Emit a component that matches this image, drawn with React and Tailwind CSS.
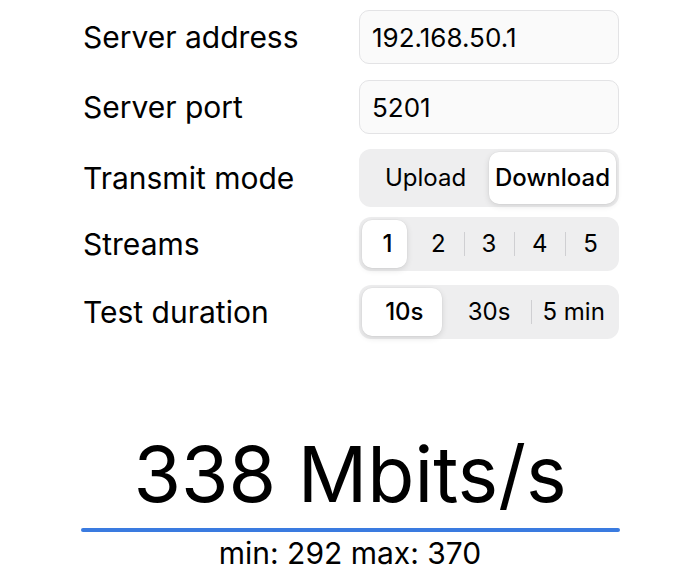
import React from "react";

function Segmented({ items, selected, thumbClass, h }) {
  return (
    <div className={"flex w-[260px] items-stretch rounded-[12px] bg-[#eeeeef] p-[3px] " + h}>
      {items.map((it, i) => {
        const isSel = i === selected;
        const showSep = i > 0 && i !== selected && i - 1 !== selected;
        return (
          <div key={it} className="relative flex flex-1 items-center justify-center">
            {showSep && (
              <div className="absolute left-0 top-1/2 h-[24px] w-px -translate-y-1/2 bg-[#cfcfd2]" />
            )}
            {isSel && (
              <div className={"absolute inset-y-0 left-0 rounded-[10px] bg-white shadow-[0_2px_6px_rgba(0,0,0,0.12),0_0_0_0.5px_rgba(0,0,0,0.04)] " + thumbClass} />
            )}
            <span className={"relative text-[24px] text-black " + (isSel ? "font-medium" : "")}>{it}</span>
          </div>
        );
      })}
    </div>
  );
}

function Row({ label, children, className }) {
  return (
    <div className={"flex items-center " + className}>
      <div className="w-[276px] text-[30px] text-black">{label}</div>
      {children}
    </div>
  );
}

function Field({ value }) {
  return (
    <div className="flex h-[54px] w-[260px] items-center rounded-[10px] border border-[#e3e3e5] bg-[#fafafa] px-[12px] text-[26px] text-black">
      {value}
    </div>
  );
}

export default function App() {
  return (
    <div
      className="flex h-[581px] w-[700px] flex-col bg-white"
      style={{ fontFamily: "Inter, 'Noto Sans', sans-serif" }}
    >
      <div className="flex flex-col pl-[83px] pt-[10px]">
        <Row label="Server address" className="h-[54px]">
          <Field value="192.168.50.1" />
        </Row>
        <Row label="Server port" className="mt-[16px] h-[54px]">
          <Field value="5201" />
        </Row>
        <Row label="Transmit mode" className="mt-[15px] h-[58px]">
          <Segmented items={["Upload", "Download"]} selected={1} thumbClass="right-0" h="h-[58px]" />
        </Row>
        <Row label="Streams" className="mt-[10px] h-[54px]">
          <Segmented items={["1", "2", "3", "4", "5"]} selected={0} thumbClass="right-[6px]" h="h-[54px]" />
        </Row>
        <Row label="Test duration" className="mt-[14px] h-[54px]">
          <Segmented items={["10s", "30s", "5 min"]} selected={0} thumbClass="right-[5px]" h="h-[54px]" />
        </Row>
      </div>
      <div className="mt-[97px] flex flex-col items-center">
        <div className="text-[77px] leading-none text-black">338 Mbits/s</div>
        <div className="mt-[15px] h-[4px] w-[539px] rounded-full bg-[#3a7be0]" />
        <div className="mt-[6px] text-[30px] leading-none text-black">min: 292 max: 370</div>
      </div>
    </div>
  );
}
